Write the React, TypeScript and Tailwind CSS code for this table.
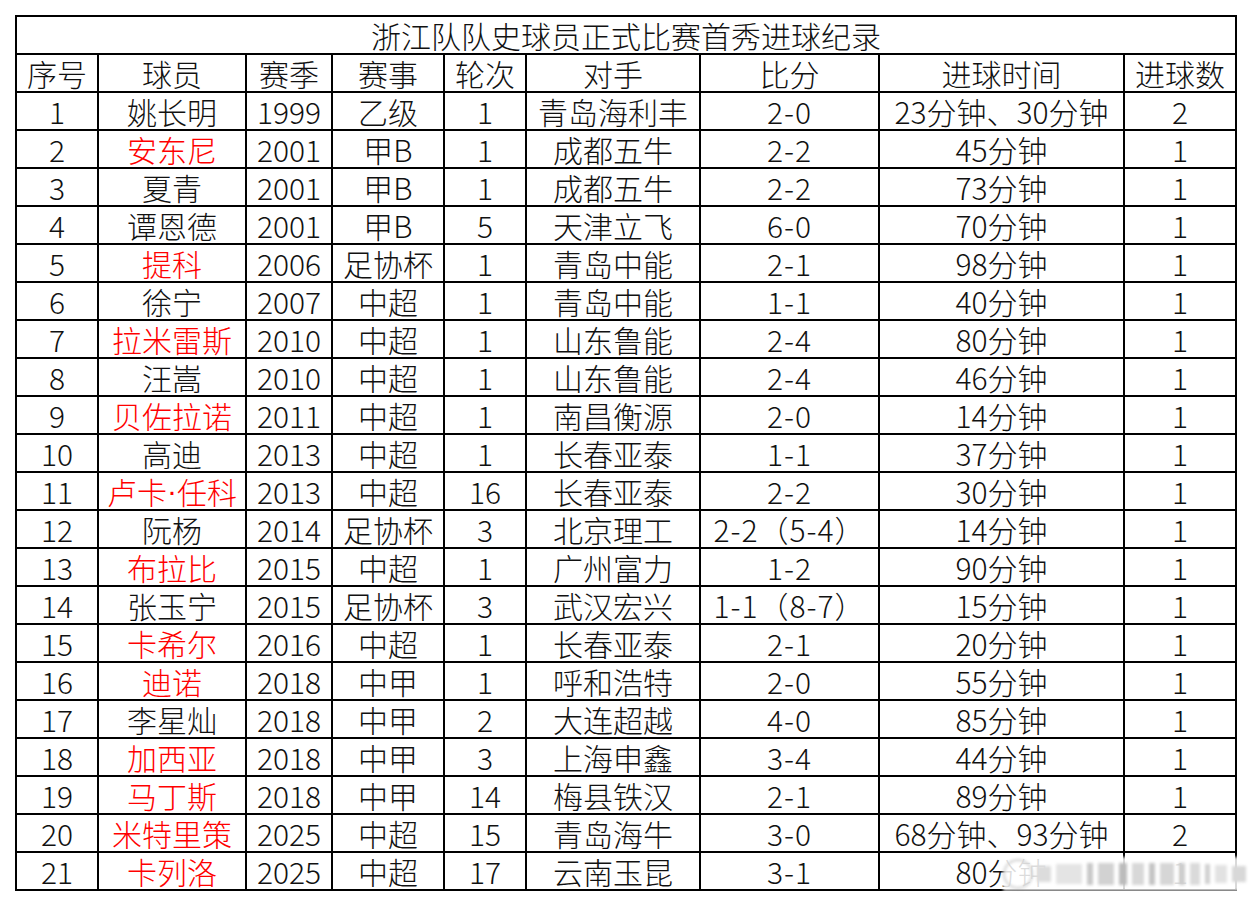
const headers = ['序号', '球员', '赛季', '赛事', '轮次', '对手', '比分', '进球时间', '进球数'];

type Row = [string, string, string, string, string, string, string, string, string, boolean];

const rows: Row[] = [
  ['1', '姚长明', '1999', '乙级', '1', '青岛海利丰', '2-0', '23分钟、30分钟', '2', false],
  ['2', '安东尼', '2001', '甲B', '1', '成都五牛', '2-2', '45分钟', '1', true],
  ['3', '夏青', '2001', '甲B', '1', '成都五牛', '2-2', '73分钟', '1', false],
  ['4', '谭恩德', '2001', '甲B', '5', '天津立飞', '6-0', '70分钟', '1', false],
  ['5', '提科', '2006', '足协杯', '1', '青岛中能', '2-1', '98分钟', '1', true],
  ['6', '徐宁', '2007', '中超', '1', '青岛中能', '1-1', '40分钟', '1', false],
  ['7', '拉米雷斯', '2010', '中超', '1', '山东鲁能', '2-4', '80分钟', '1', true],
  ['8', '汪嵩', '2010', '中超', '1', '山东鲁能', '2-4', '46分钟', '1', false],
  ['9', '贝佐拉诺', '2011', '中超', '1', '南昌衡源', '2-0', '14分钟', '1', true],
  ['10', '高迪', '2013', '中超', '1', '长春亚泰', '1-1', '37分钟', '1', false],
  ['11', '卢卡·任科', '2013', '中超', '16', '长春亚泰', '2-2', '30分钟', '1', true],
  ['12', '阮杨', '2014', '足协杯', '3', '北京理工', '2-2（5-4）', '14分钟', '1', false],
  ['13', '布拉比', '2015', '中超', '1', '广州富力', '1-2', '90分钟', '1', true],
  ['14', '张玉宁', '2015', '足协杯', '3', '武汉宏兴', '1-1（8-7）', '15分钟', '1', false],
  ['15', '卡希尔', '2016', '中超', '1', '长春亚泰', '2-1', '20分钟', '1', true],
  ['16', '迪诺', '2018', '中甲', '1', '呼和浩特', '2-0', '55分钟', '1', true],
  ['17', '李星灿', '2018', '中甲', '2', '大连超越', '4-0', '85分钟', '1', false],
  ['18', '加西亚', '2018', '中甲', '3', '上海申鑫', '3-4', '44分钟', '1', true],
  ['19', '马丁斯', '2018', '中甲', '14', '梅县铁汉', '2-1', '89分钟', '1', true],
  ['20', '米特里策', '2025', '中超', '15', '青岛海牛', '3-0', '68分钟、93分钟', '2', true],
  ['21', '卡列洛', '2025', '中超', '17', '云南玉昆', '3-1', '80分钟', '1', true],
];

function Cell({ children, red, wide }: { children: React.ReactNode; red?: boolean; wide?: boolean }) {
  return (
    <div
      className={`bg-white h-[36px] flex items-center justify-center whitespace-nowrap overflow-visible leading-none ${
        red ? 'text-[#ff0000]' : 'text-[#111111]'
      } ${wide ? 'tracking-[1px]' : ''}`}
    >
      {children}
    </div>
  );
}

// narrow middle dot, like the Latin one in the sheet
function Name({ text }: { text: string }) {
  if (!text.includes('·')) return <>{text}</>;
  const [a, b] = text.split('·');
  return (
    <>
      {a}
      <span style={{ fontFamily: '"Liberation Sans", sans-serif' }}>·</span>
      {b}
    </>
  );
}

export default function App() {
  return (
    <div
      className="w-[1252px] h-[906px] bg-white relative overflow-hidden font-light"
      style={{ fontFamily: '"Noto Sans CJK SC", "Noto Sans", sans-serif' }}
    >
      <div className="pt-[15px] pl-[15px]">
        <div className="w-[1222px] bg-black p-[2px] flex flex-col gap-[2px] text-[30px]">
          <div className="bg-white h-[36px] flex items-center justify-center text-[#111111] leading-none">
            浙江队队史球员正式比赛首秀进球纪录
          </div>
          <div className="grid grid-cols-[80px_146px_84px_110px_80px_172px_177px_243px_110px] gap-[2px]">
            {headers.map((h) => (
              <Cell key={h}>{h}</Cell>
            ))}
            {rows.map((r) => [
              <Cell key={r[0] + 'a'}>{r[0]}</Cell>,
              <Cell key={r[0] + 'b'} red={r[9]}>
                <Name text={r[1]} />
              </Cell>,
              <Cell key={r[0] + 'c'}>{r[2]}</Cell>,
              <Cell key={r[0] + 'd'}>{r[3]}</Cell>,
              <Cell key={r[0] + 'e'}>{r[4]}</Cell>,
              <Cell key={r[0] + 'f'}>{r[5]}</Cell>,
              <Cell key={r[0] + 'g'} wide>{r[6]}</Cell>,
              <Cell key={r[0] + 'h'}>{r[7]}</Cell>,
              <Cell key={r[0] + 'i'}>{r[8]}</Cell>,
            ])}
          </div>
        </div>
      </div>

      {/* blurred weibo watermark */}
      <div className="absolute left-[1003px] top-[857px] w-[240px] h-[34px] bg-white/85 blur-[1.5px] flex items-center">
        <div className="w-[30px] h-[30px] rounded-full border-[2px] border-[#d0d0d0] shrink-0" />
        <div className="flex items-center gap-[5px] ml-[4px] h-[22px]">
          <div className="w-[14px] h-[16px] bg-[#dcdcdc]" />
          <div className="w-[26px] h-[20px] bg-[#e4e4e4]" />
          <div className="w-[6px] h-[22px] bg-[#c8c8c8]" />
          <div className="w-[16px] h-[22px] bg-[#d2d2d2]" />
          <div className="w-[8px] h-[22px] bg-[#bcbcbc]" />
          <div className="w-[12px] h-[22px] bg-[#d8d8d8]" />
          <div className="w-[6px] h-[22px] bg-[#c4c4c4]" />
          <div className="w-[14px] h-[22px] bg-[#d6d6d6]" />
          <div className="w-[6px] h-[22px] bg-[#cccccc]" />
          <div className="w-[10px] h-[22px] bg-[#dadada]" />
          <div className="w-[5px] h-[20px] bg-[#d0d0d0]" />
          <div className="w-[12px] h-[18px] bg-[#e2e2e2]" />
          <div className="w-[14px] h-[16px] bg-[#d8d8d8]" />
        </div>
      </div>
    </div>
  );
}
